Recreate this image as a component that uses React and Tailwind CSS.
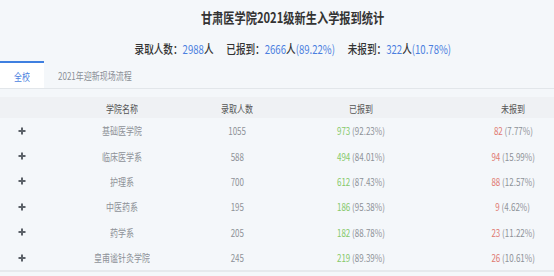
import React from "react";

const rows = [
  { name: "基础医学院", total: 1055, done: 973, donePct: "92.23%", left: 82, leftPct: "7.77%" },
  { name: "临床医学系", total: 588, done: 494, donePct: "84.01%", left: 94, leftPct: "15.99%" },
  { name: "护理系", total: 700, done: 612, donePct: "87.43%", left: 88, leftPct: "12.57%" },
  { name: "中医药系", total: 195, done: 186, donePct: "95.38%", left: 9, leftPct: "4.62%" },
  { name: "药学系", total: 205, done: 182, donePct: "88.78%", left: 23, leftPct: "11.22%" },
  { name: "皇甫谧针灸学院", total: 245, done: 219, donePct: "89.39%", left: 26, leftPct: "10.61%" },
];

// the screenshot's type is narrow, so squeeze text a bit
function Narrow({ children, className = "" }) {
  return <span className={"inline-block scale-x-[0.8] whitespace-nowrap " + className}>{children}</span>;
}

function Plus() {
  return (
    <svg width="8" height="8" viewBox="0 0 8 8" className="text-[#5b6168]">
      <path d="M4 0.5v7M0.5 4h7" stroke="currentColor" strokeWidth="2" />
    </svg>
  );
}

const cols = "grid grid-cols-[44px_155px_76px_172px_1fr] items-center";

export default function App() {
  return (
    <div className="w-full h-[276px] overflow-hidden bg-[#f4f7fa] font-['Noto_Sans_CJK_SC','Noto_Sans',sans-serif]">
      {/* Title */}
      <div className="pl-[32px]">
        <div className="h-[33px] flex items-center justify-center pt-[1px]">
          <Narrow className="text-[14px] font-bold text-[#333] leading-none">甘肃医学院2021级新生入学报到统计</Narrow>
        </div>
        <div className="h-[28px] flex items-center justify-center pt-[4px]">
          <Narrow className="text-[12px] font-medium text-[#333] leading-none">
            录取人数：<span className="text-[#4b7fe0] font-normal">2988</span>人
            <span className="inline-block w-[16px]" />
            已报到：<span className="text-[#4b7fe0] font-normal">2666</span>人<span className="text-[#4b7fe0] font-normal">(89.22%)</span>
            <span className="inline-block w-[16px]" />
            未报到：<span className="text-[#4b7fe0] font-normal">322</span>人<span className="text-[#4b7fe0] font-normal">(10.78%)</span>
          </Narrow>
        </div>
      </div>

      {/* Tabs */}
      <div className="flex h-[28px] border-b border-[#e2e6ea]">
        <div className="w-[44px] bg-white border-t-2 border-[#3f7fe0] flex items-center justify-center pt-[2px]">
          <Narrow className="text-[10px] text-[#4b7fe0]">全校</Narrow>
        </div>
        <div className="flex items-center pl-[14px] pt-[2px]">
          <Narrow className="text-[10px] text-[#8a8f96] origin-left">2021年迎新现场流程</Narrow>
        </div>
      </div>

      {/* Table */}
      <div className="mt-[8px] border-b-2 border-[#e6e9ed]">
        <div className={cols + " h-[21px] bg-[#eff1f4] text-[10px] text-[#555] pt-[2px]"}>
          <div />
          <div className="text-center"><Narrow>学院名称</Narrow></div>
          <div className="text-center"><Narrow>录取人数</Narrow></div>
          <div className="text-center"><Narrow>已报到</Narrow></div>
          <div className="text-center pl-[25px]"><Narrow>未报到</Narrow></div>
        </div>
        {rows.map((r) => (
          <div key={r.name} className={cols + " h-[25.4px] text-[10px] text-[#8e9298]"}>
            <div className="flex justify-center"><Plus /></div>
            <div className="text-center"><Narrow>{r.name}</Narrow></div>
            <div className="text-center"><Narrow>{r.total}</Narrow></div>
            <div className="text-center">
              <Narrow><span className="text-[#86c96a]">{r.done}</span> ({r.donePct})</Narrow>
            </div>
            <div className="text-center pl-[25px]">
              <Narrow><span className="text-[#e07a72]">{r.left}</span> ({r.leftPct})</Narrow>
            </div>
          </div>
        ))}
      </div>
    </div>
  );
}
